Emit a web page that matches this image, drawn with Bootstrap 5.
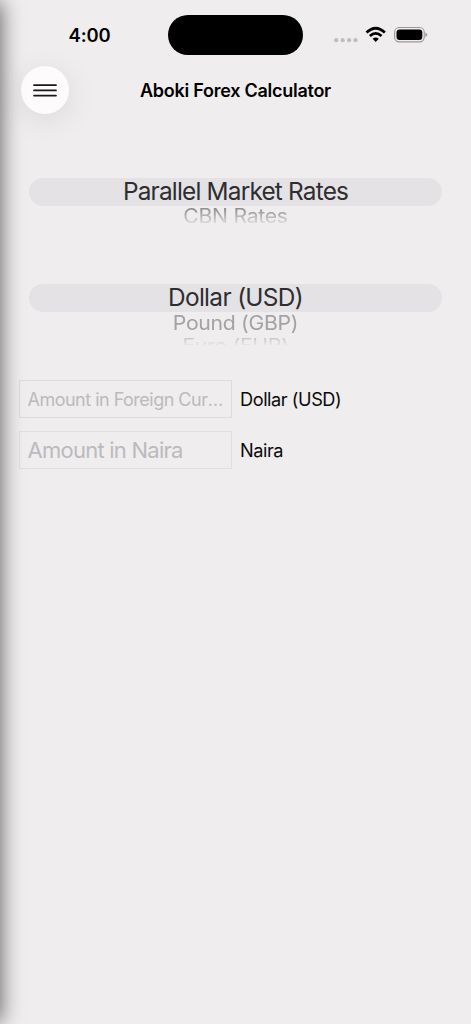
<!DOCTYPE html>
<html lang="en">
<head>
<meta charset="utf-8">
<meta name="viewport" content="width=device-width, initial-scale=1">
<title>Aboki Forex Calculator</title>
<link rel="stylesheet" href="https://cdn.jsdelivr.net/npm/bootstrap@5.3.0/dist/css/bootstrap.min.css">
<style>
body{background:#efedee;color:#0b0b0b;font-family:Inter,"Liberation Sans",sans-serif;height:1024px;overflow:hidden}
.screen{width:471px;height:1024px}
.drawer-edge{left:-40px;top:2px;bottom:2px;width:40px;box-shadow:0 0 22px rgba(0,0,0,.64);pointer-events:none;z-index:5}
.status{height:66px;padding-top:15px}
.clock{width:168px;padding-left:68.5px;font-size:18.4px;font-weight:600;line-height:40px;letter-spacing:-.1px;color:#000}
.island{width:135px;height:39.5px;border-radius:20px;background:#000}
.indicators{padding-left:31px;height:40px}
.titlebar{height:49px;padding-left:21px}
.menu-btn{width:48px;height:48px;background:#fdfbfc;box-shadow:0 6px 32px rgba(0,0,0,.09)}
.page-title{width:191px;margin-left:71px;font-size:18px;font-weight:600;letter-spacing:-.26px;line-height:48px;padding-top:1px;color:#000}
.wheel{margin:0 29px;text-align:center;white-space:nowrap}
.wheel-rates{padding-top:63px;height:169px}
.wheel-currency{height:96px}
.picked{height:28px;border-radius:14px;background:#e4e2e5;color:#2e2d30;font-size:24.4px;line-height:27px;letter-spacing:-.81px}
.wheel-currency .picked{letter-spacing:-.66px}
.next{height:22px;font-size:21.2px;line-height:21px;letter-spacing:-.3px;color:#a3a2a4}
.next span{display:inline-block;transform:scaleY(.95)}
.fade-row{overflow:hidden;height:18px;line-height:20px;color:#8f8e90;-webkit-mask-image:linear-gradient(#000 15%,rgba(0,0,0,.15));mask-image:linear-gradient(#000 15%,rgba(0,0,0,.15))}
.wheel-rates .fade-row span{transform:translateY(-.6px) scaleY(.92)}
.fade-last{height:11px;line-height:22px;opacity:.5}
.fade-last span{transform:scaleY(.85)}
.entry{padding-left:19px;margin-bottom:13px}
.amount{width:213px;height:38px;padding:0 5px 0 7.5px;border:1px solid #dddbdd;border-radius:0;background:#efedee;font-size:18px;letter-spacing:-.51px;text-overflow:ellipsis}
.amount:focus{background:#efedee}
.amount::placeholder{color:#bcbabd;opacity:1;text-overflow:ellipsis}
.amount.large{font-size:22px;letter-spacing:-.75px;border-color:#e1dfe1}
.unit{font-size:18.2px;letter-spacing:-.45px;line-height:39px;height:38px;color:#0b0b0b}
</style>
</head>
<body>
<div class="screen position-relative overflow-hidden">
  <div class="drawer-edge position-absolute"></div>
  <header>
    <div class="status d-flex">
      <div class="clock">4:00</div>
      <div class="island"></div>
      <div class="indicators d-flex align-items-center">
        <svg width="94" height="40" viewBox="0 0 94 40" aria-hidden="true">
          <g fill="#bfbdbf"><circle cx="2.2" cy="25.2" r="2.1"/><circle cx="8.7" cy="25.2" r="2.1"/><circle cx="15.1" cy="25.2" r="2.1"/><circle cx="21.5" cy="25.2" r="2.1"/></g>
          <g fill="none" stroke="#000" stroke-width="2.8"><path d="M32.5 17.5Q41.7 8.9 50.9 17.5"/><path d="M35.9 21.1Q41.7 15.7 47.5 21.1"/></g>
          <path d="M38.6 23.7Q41.7 21.2 44.8 23.7L41.7 27Z"/>
          <rect x="60.6" y="12.5" width="29.6" height="14.4" rx="4.6" fill="none" stroke="#99979a" stroke-width="1.1"/>
          <rect x="62.5" y="14.4" width="25.8" height="10.6" rx="3"/>
          <path d="M91.3 17.4Q93.2 18.1 93.2 19.7T91.3 22Z" fill="#99979a"/>
        </svg>
      </div>
    </div>
    <nav class="titlebar d-flex align-items-start">
      <button class="menu-btn btn border-0 rounded-circle p-0 d-flex align-items-center justify-content-center" aria-label="Menu">
        <svg width="26" height="16" viewBox="0 0 26 16" stroke="#181818" stroke-width="1.7" stroke-linecap="round"><path d="M2 3.2H24M2 8.4H24M2 13.6H24"/></svg>
      </button>
      <h1 class="page-title mb-0 text-nowrap">Aboki Forex Calculator</h1>
    </nav>
  </header>
  <main>
    <section class="wheel wheel-rates">
      <div class="picked">Parallel Market Rates</div>
      <div class="next fade-row"><span>CBN Rates</span></div>
    </section>
    <section class="wheel wheel-currency">
      <div class="picked">Dollar (USD)</div>
      <div class="next"><span>Pound (GBP)</span></div>
      <div class="next fade-row fade-last"><span>Euro (EUR)</span></div>
    </section>
    <form class="d-flex flex-column">
      <div class="d-flex gap-2 entry"><input id="foreign" class="amount form-control flex-shrink-0" type="text" placeholder="Amount in Foreign Currency"><label for="foreign" class="unit">Dollar (USD)</label></div>
      <div class="d-flex gap-2 entry"><input id="naira" class="amount large form-control flex-shrink-0" type="text" placeholder="Amount in Naira"><label for="naira" class="unit">Naira</label></div>
    </form>
  </main>
</div>
<script src="https://cdn.jsdelivr.net/npm/bootstrap@5.3.0/dist/js/bootstrap.bundle.min.js"></script>
</body>
</html>
